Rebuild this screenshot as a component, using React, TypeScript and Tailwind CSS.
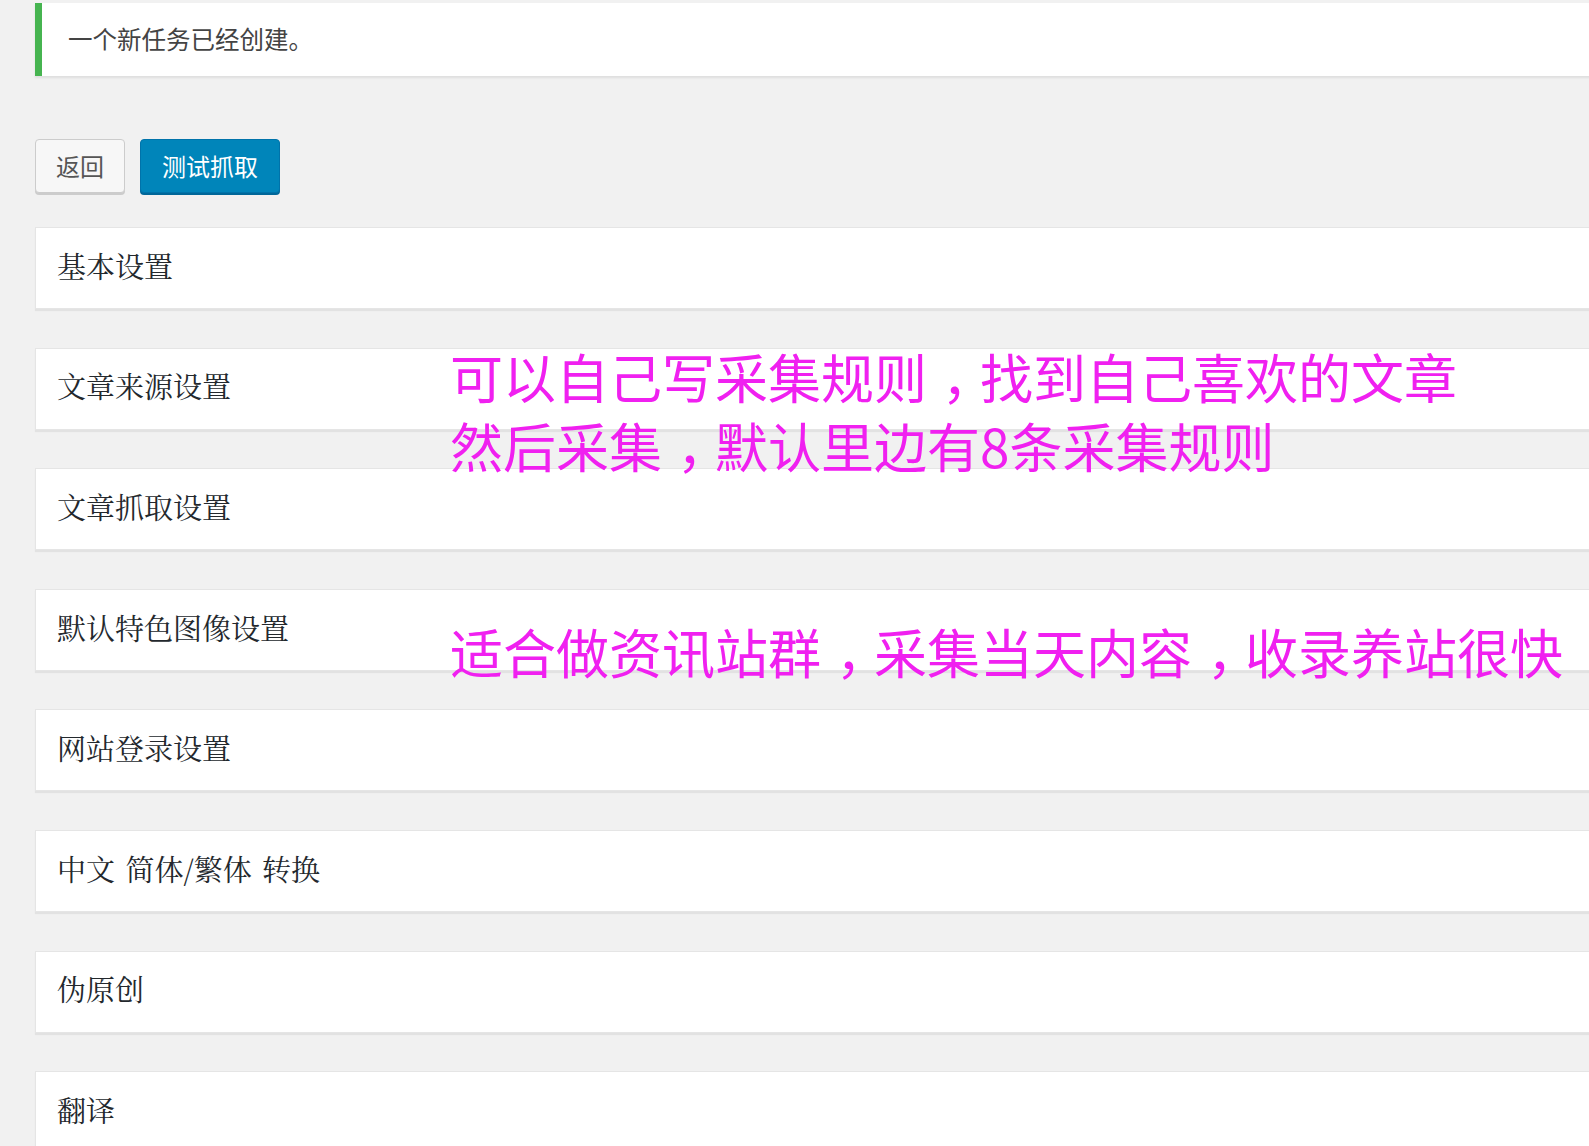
const sections = [
  '基本设置',
  '文章来源设置',
  '文章抓取设置',
  '默认特色图像设置',
  '网站登录设置',
  '中文 简体/繁体 转换',
  '伪原创',
  '翻译',
];

const sans = "font-['Noto_Sans_CJK_SC','Liberation_Sans',sans-serif]";

// full-width comma, glyph nudged toward the middle of its cell like the reference
const Comma = () => <span className="pl-[0.28em] tracking-[-0.28em]">，</span>;

export default function App() {
  return (
    <div className="relative h-[1146px] w-[1589px] overflow-hidden bg-[#f1f1f1]">
      <div className={`flex w-[1620px] flex-col pl-[35px] pt-[3px] ${sans}`}>
        {/* notice */}
        <div className="flex h-[73px] items-center border-l-[7px] border-[#46b450] bg-white pl-[26px] text-[24.5px] text-[#444] shadow-[0_2px_2px_rgba(0,0,0,0.08)]">
          一个新任务已经创建。
        </div>

        {/* buttons */}
        <div className="mt-[63px] flex gap-[15px]">
          <button className="flex h-[54px] w-[90px] items-center justify-center rounded-[4px] border border-[#cccccc] bg-[#f7f7f7] text-[24px] text-[#555] shadow-[0_2px_0_#cccccc]">
            返回
          </button>
          <button className="flex h-[54px] w-[140px] items-center justify-center rounded-[4px] border border-[#0073aa] bg-[#0085ba] text-[24px] text-white shadow-[0_2px_0_#006799]">
            测试抓取
          </button>
        </div>

        {/* setting panels */}
        <div className="mt-[34px] flex flex-col gap-[38.6px]">
          {sections.map((title) => (
            <div
              key={title}
              className="flex h-[82px] shrink-0 items-center border border-[#e5e5e5] bg-white pb-[5px] pl-[21px] shadow-[0_2px_1px_rgba(0,0,0,0.06)]"
            >
              <h2 className="font-['Noto_Serif_CJK_SC','Noto_Sans_CJK_SC',serif] text-[29px] font-normal text-[#23282d] [word-spacing:3px]">
                {title}
              </h2>
            </div>
          ))}
        </div>
      </div>

      {/* annotations over the page */}
      <div className={`absolute left-[450px] top-[342px] text-[53px] leading-[69px] text-[#f020f0] ${sans}`}>
        <p>可以自己写采集规则<Comma />找到自己喜欢的文章</p>
        <p>然后采集<Comma />默认里边有8条采集规则</p>
      </div>
      <p className={`absolute left-[450px] top-[617px] text-[53px] leading-[69px] text-[#f020f0] ${sans}`}>
        适合做资讯站群<Comma />采集当天内容<Comma />收录养站很快
      </p>
    </div>
  );
}
